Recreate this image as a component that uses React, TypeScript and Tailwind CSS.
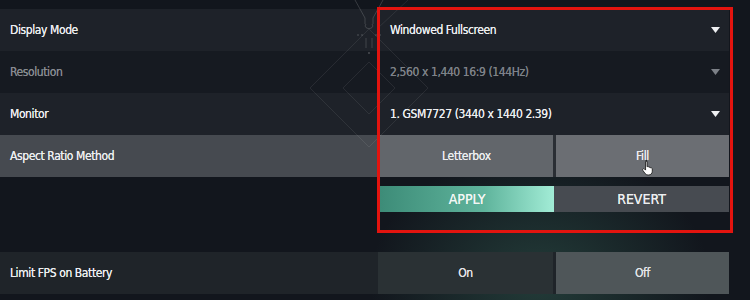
import { FC } from "react";

const font = { fontFamily: "'DejaVu Sans Condensed', 'DejaVu Sans', sans-serif" };

const Caret: FC<{ dim?: boolean }> = ({ dim }) => (
  <svg width="9" height="6" viewBox="0 0 9 6" className="shrink-0">
    <path d="M0 0 H9 L4.5 6 Z" fill={dim ? "#7c8087" : "#eef0f2"} />
  </svg>
);

const Hand: FC = () => (
  <svg width="13" height="17" viewBox="0 0 12 15" className="absolute left-[86px] top-[24px]">
    <path
      d="M3.5 1.2c.7 0 1.2.5 1.2 1.2v4.4l.3-.1c.6-.3 1.3.1 1.5.6.6-.3 1.3 0 1.5.6.6-.3 1.4.1 1.5.8V11c0 1.9-1.4 3.4-3.3 3.4H5.4c-1 0-1.9-.5-2.5-1.3L.8 10.2c-.4-.5-.3-1.2.2-1.5.5-.3 1.1-.2 1.4.2l.9 1V2.4c0-.7.5-1.2 1.2-1.2z"
      fill="#ffffff"
      stroke="#1a1a1a"
      strokeWidth="0.8"
    />
  </svg>
);

const Row: FC<{ label: string; dim?: boolean; bg: string; children: React.ReactNode }> = ({ label, dim, bg, children }) => (
  <div className={`flex h-[42px] w-[729px] ${bg}`}>
    <div className={`flex-1 flex items-center pl-[10px] text-[12px] tracking-[-0.4px] [text-shadow:0_0_0.5px_currentColor] ${dim ? "text-[#878a90]" : "text-[#eceef0]"}`}>{label}</div>
    <div className="w-[349px] flex">{children}</div>
  </div>
);

const Dropdown: FC<{ value: string; dim?: boolean }> = ({ value, dim }) => (
  <div className="flex-1 flex items-center justify-between pl-[10px] pr-[9px]">
    <span className={`text-[12px] tracking-[-0.4px] [text-shadow:0_0_0.5px_currentColor] ${dim ? "text-[#7e8288]" : "text-[#eceef0]"}`}>{value}</span>
    <Caret dim={dim} />
  </div>
);

export default function App() {
  return (
    <div
      className="relative w-[750px] h-[300px] overflow-hidden bg-[#12161d] pt-[9px] antialiased"
      style={font}
    >
      <div className="absolute inset-0 bg-[radial-gradient(ellipse_170px_130px_at_540px_280px,rgba(70,140,115,0.32),transparent)]" />

      <div className="relative flex flex-col">
        <Row label="Display Mode" bg="bg-[#1e2229]">
          <Dropdown value="Windowed Fullscreen" />
        </Row>
        <Row label="Resolution" dim bg="bg-[#161a21]">
          <Dropdown value="2,560 x 1,440 16:9 (144Hz)" dim />
        </Row>
        <Row label="Monitor" bg="bg-[#1e2229]">
          <Dropdown value="1. GSM7727 (3440 x  1440 2.39)" />
        </Row>
        <Row label="Aspect Ratio Method" bg="bg-[#464a50]">
          <div className="flex-1 grid grid-cols-2 gap-[3px] bg-[#2a2e34]">
            <div className="flex items-center justify-center bg-[#62666b] text-[12px] tracking-[-0.3px] text-[#eceef0] [text-shadow:0_0_0.5px_currentColor]">Letterbox</div>
            <div className="relative flex items-center justify-center bg-[#6b6e73] text-[12px] tracking-[-0.3px] text-[#eceef0] [text-shadow:0_0_0.5px_currentColor]">
              Fill
              <Hand />
            </div>
          </div>
        </Row>

        <div className="h-[75px] w-[729px] flex">
          <div className="flex-1" />
          <div className="w-[349px] pt-[9px]">
            <div className="flex h-[26px]">
              <div className="w-[174px] flex items-center justify-center bg-[linear-gradient(90deg,#3d8c78,#5fb49c_60%,#a2ecd6)] text-[14px] text-[#f2f6f4] [text-shadow:0_0_0.5px_currentColor]">
                APPLY
              </div>
              <div className="flex-1 flex items-center justify-center bg-[#474b51] text-[14px] text-[#eceef0] [text-shadow:0_0_0.5px_currentColor]">
                REVERT
              </div>
            </div>
          </div>
        </div>

        <Row label="Limit FPS on Battery" bg="bg-[#1f2429]">
          <div className="flex-1 grid grid-cols-2 gap-[3px]">
            <div className="-ml-[2px] flex items-center justify-center bg-[#2a3134] text-[12px] tracking-[-0.3px] text-[#e4e6e8] [text-shadow:0_0_0.5px_currentColor]">On</div>
            <div className="flex items-center justify-center bg-[#4f5659] text-[12px] tracking-[-0.3px] text-[#e4e6e8] [text-shadow:0_0_0.5px_currentColor]">Off</div>
          </div>
        </Row>
      </div>

      <svg width="750" height="300" className="absolute inset-0 pointer-events-none">
        <g stroke="#ffffff" strokeOpacity="0.08" fill="none" strokeWidth="1">
          <path d="M310 88 L369 29 L428 88 L369 147 Z" />
          <path d="M343 88 L369 62 L395 88 L369 114 Z" />
          <path d="M408 0 L378 28" />
        </g>
        <g stroke="#ffffff" strokeOpacity="0.16" fill="none" strokeWidth="1">
          <path d="M355 0 L365 18 L365 24" />
          <path d="M383 0 L373 18 L373 24" />
          <path d="M366 24 C362 30 376 30 372 24" />
          <path d="M366 38 L366 48 M372 38 L372 48" />
        </g>
        <g fill="#ffffff" fillOpacity="0.25">
          <circle cx="358" cy="35" r="0.8" />
          <circle cx="362" cy="35" r="0.8" />
          <circle cx="376" cy="35" r="0.8" />
          <circle cx="380" cy="35" r="0.8" />
          <circle cx="369" cy="53" r="0.9" />
        </g>
      </svg>

      <div className="absolute left-[377px] top-[7px] w-[356px] h-[226px] border-[3px] border-[#e3140f] pointer-events-none" />
    </div>
  );
}
